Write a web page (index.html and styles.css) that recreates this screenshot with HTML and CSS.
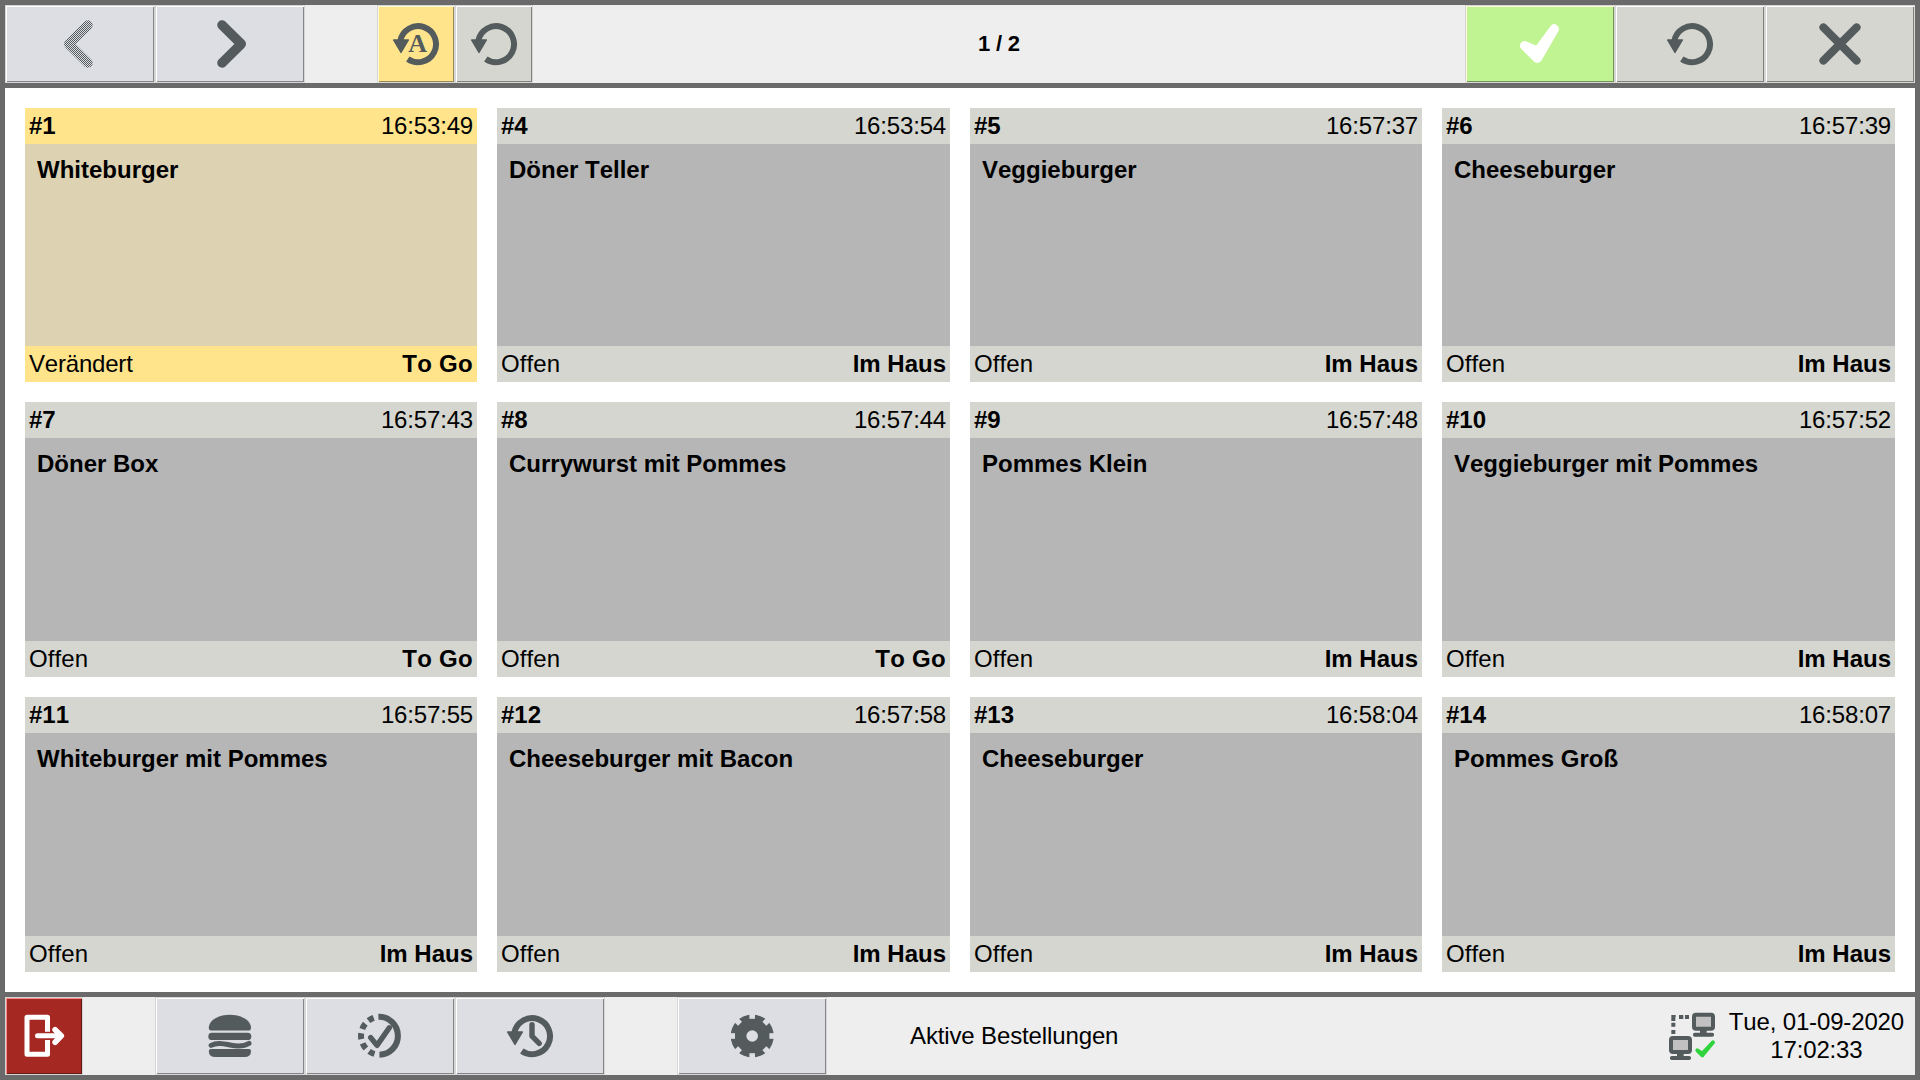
FILE: index.html
```html
<!DOCTYPE html>
<html lang="de">
<head>
<meta charset="utf-8">
<title>Aktive Bestellungen</title>
<link rel="stylesheet" href="styles.css">
</head>
<body>
<svg class="defs" aria-hidden="true">
  <defs>
    <pattern id="stipple" width="2" height="2" patternUnits="userSpaceOnUse">
      <path class="dot" d="M0 0h1v1h-1zM1 1h1v1h-1z"/>
    </pattern>
    <mask id="gear-cut" maskUnits="userSpaceOnUse" x="0" y="0" width="48" height="48">
      <rect width="48" height="48" fill="#fff"/>
      <circle cx="24.2" cy="24" r="5.8"/>
      <g id="notches">
        <rect x="21.4" y="0" width="5.6" height="6.8"/>
        <rect x="21.4" y="0" width="5.6" height="6.8" transform="rotate(45 24.2 24)"/>
        <rect x="21.4" y="0" width="5.6" height="6.8" transform="rotate(90 24.2 24)"/>
        <rect x="21.4" y="0" width="5.6" height="6.8" transform="rotate(135 24.2 24)"/>
        <rect x="21.4" y="0" width="5.6" height="6.8" transform="rotate(180 24.2 24)"/>
        <rect x="21.4" y="0" width="5.6" height="6.8" transform="rotate(225 24.2 24)"/>
        <rect x="21.4" y="0" width="5.6" height="6.8" transform="rotate(270 24.2 24)"/>
        <rect x="21.4" y="0" width="5.6" height="6.8" transform="rotate(315 24.2 24)"/>
      </g>
    </mask>
    <symbol id="undo" viewBox="0 0 48 48">
      <path d="M8.4 20.5A18 18 0 1 1 15.8 39" fill="none" stroke="currentColor" stroke-width="6"/>
      <path d="M1.6 20H16.4L9 32.4Z" fill="currentColor" stroke="currentColor" stroke-width="1.4" stroke-linejoin="round"/>
    </symbol>
  </defs>
</svg>
<div class="app">
  <header class="bar">
    <button class="btn" disabled><svg class="icon" viewBox="0 0 48 48"><path class="line stippled" stroke-width="9.5" d="M32 5L12.75 24L32 43"/></svg></button>
    <button class="btn"><svg class="icon" viewBox="0 0 48 48"><path class="line" stroke-width="9.5" d="M16 5L35.25 24L16 43"/></svg></button>
    <button class="btn small yellow gap-before"><svg class="icon" viewBox="0 0 48 48"><use href="#undo"/><text class="auto" x="25.6" y="32.3">A</text></svg></button>
    <button class="btn small neutral"><svg class="icon"><use href="#undo"/></svg></button>
    <div class="pager">1 / 2</div>
    <button class="btn green"><svg class="icon" viewBox="0 0 48 48"><path class="solid" stroke-width="9.4" d="M8.7 25.7L21.3 38.3L38.3 9L21.8 31.4Z"/></svg></button>
    <button class="btn neutral"><svg class="icon"><use href="#undo"/></svg></button>
    <button class="btn neutral"><svg class="icon" viewBox="0 0 48 48"><path class="line" stroke-width="8" d="M7.4 7.4L40.6 40.6M40.6 7.4L7.4 40.6"/></svg></button>
  </header>

  <main class="orders">
    <article class="order changed"><div class="strip"><b>#1</b><span class="time">16:53:49</span></div><div class="item">Whiteburger</div><div class="strip"><span class="edited">Verändert</span><b class="togo">To Go</b></div></article>
    <article class="order"><div class="strip"><b>#4</b><span class="time">16:53:54</span></div><div class="item">Döner Teller</div><div class="strip"><span class="open">Offen</span><b>Im Haus</b></div></article>
    <article class="order"><div class="strip"><b>#5</b><span class="time">16:57:37</span></div><div class="item">Veggieburger</div><div class="strip"><span class="open">Offen</span><b>Im Haus</b></div></article>
    <article class="order"><div class="strip"><b>#6</b><span class="time">16:57:39</span></div><div class="item">Cheeseburger</div><div class="strip"><span class="open">Offen</span><b>Im Haus</b></div></article>
    <article class="order"><div class="strip"><b>#7</b><span class="time">16:57:43</span></div><div class="item">Döner Box</div><div class="strip"><span class="open">Offen</span><b class="togo">To Go</b></div></article>
    <article class="order"><div class="strip"><b>#8</b><span class="time">16:57:44</span></div><div class="item">Currywurst mit Pommes</div><div class="strip"><span class="open">Offen</span><b class="togo">To Go</b></div></article>
    <article class="order"><div class="strip"><b>#9</b><span class="time">16:57:48</span></div><div class="item">Pommes Klein</div><div class="strip"><span class="open">Offen</span><b>Im Haus</b></div></article>
    <article class="order"><div class="strip"><b>#10</b><span class="time">16:57:52</span></div><div class="item">Veggieburger mit Pommes</div><div class="strip"><span class="open">Offen</span><b>Im Haus</b></div></article>
    <article class="order"><div class="strip"><b>#11</b><span class="time">16:57:55</span></div><div class="item">Whiteburger mit Pommes</div><div class="strip"><span class="open">Offen</span><b>Im Haus</b></div></article>
    <article class="order"><div class="strip"><b>#12</b><span class="time">16:57:58</span></div><div class="item">Cheeseburger mit Bacon</div><div class="strip"><span class="open">Offen</span><b>Im Haus</b></div></article>
    <article class="order"><div class="strip"><b>#13</b><span class="time">16:58:04</span></div><div class="item">Cheeseburger</div><div class="strip"><span class="open">Offen</span><b>Im Haus</b></div></article>
    <article class="order"><div class="strip"><b>#14</b><span class="time">16:58:07</span></div><div class="item">Pommes Groß</div><div class="strip"><span class="open">Offen</span><b>Im Haus</b></div></article>
  </main>

  <footer class="bar">
    <button class="btn small red"><svg class="icon" viewBox="0 0 48 48">
      <path d="M27.5 19.7V5.2H7V42.2H27.5V28" fill="none" stroke="currentColor" stroke-width="5" stroke-linejoin="round"/>
      <path class="line" stroke-width="5" d="M17.5 23.8H39"/>
      <path class="line" stroke-width="5.6" d="M35.1 17.8L41.3 23.8L35.1 30.2"/>
    </svg></button>
    <button class="btn gap-before"><svg class="icon" viewBox="0 0 48 48" fill="currentColor">
      <path d="M2.8 15C4 7 14 2.8 23.8 2.8S43.8 7 45 15Q45.2 18.4 43 18.4H5Q2.6 18.4 2.8 15Z"/>
      <rect x="2.3" y="20.8" width="43" height="7.2" rx="3.6"/>
      <path class="line" stroke-width="5" d="M5.1 33.4C11 30.2 17 31.6 24 33C31 34.4 38 34.4 43 31.4"/>
      <path d="M5 37H43Q45 37 45 39Q45 45 38.5 45H9.3Q2.8 45 2.8 39Q2.8 37 5 37Z"/>
    </svg></button>
    <button class="btn"><svg class="icon" viewBox="0 0 48 48">
      <g fill="none" stroke="currentColor" stroke-width="6">
        <path d="M22.4 4.8A19 19 0 1 1 23.4 42.8"/>
        <path stroke-dasharray="6 4.38" d="M18.5 42A19 19 0 0 1 17.7 5.9"/>
      </g>
      <path class="line" stroke-width="5.4" d="M14.7 25.6L21 33.4L33.3 15.8"/>
    </svg></button>
    <button class="btn"><svg class="icon" viewBox="0 0 48 48"><use href="#undo"/><path class="line" stroke-width="5.4" d="M26 12.6V24.2L33.2 31.4"/></svg></button>
    <button class="btn gap-before"><svg class="icon" viewBox="0 0 48 48"><circle cx="24.2" cy="24" r="21.5" fill="currentColor" mask="url(#gear-cut)"/></svg></button>
    <div class="view-name">Aktive Bestellungen</div>
    <svg class="network" viewBox="84 93 144 150">
      <g fill="currentColor">
        <path d="M94 105h13v6h-1v12h-12zM117 105h13v12h-13zM135 105h12v12h-12zM94 128h12v12h-12zM94 150h12v12h-12z"/>
        <rect x="180" y="148" width="20" height="14"/>
        <rect x="159" y="158" width="63" height="12" rx="5"/>
        <rect x="111" y="218" width="20" height="14"/>
        <rect x="90" y="228" width="63" height="12" rx="5"/>
      </g>
      <g fill="#c1c1c1" stroke="currentColor" stroke-width="12">
        <rect x="162" y="104" width="57" height="42" rx="6"/>
        <rect x="93" y="174" width="57" height="42" rx="6"/>
      </g>
      <path class="online" d="M172 211L187 226L219 187L187 221Z"/>
    </svg>
    <div class="clock">Tue, 01-09-2020<br>17:02:33</div>
  </footer>
</div>
</body>
</html>
```
FILE: styles.css
```css
* {
  box-sizing: border-box;
}

body {
  margin: 0;
  font-family: "Liberation Sans", Arial, sans-serif;
  font-size: 24px;
  font-kerning: none;
  color: #000;
}

.defs {
  position: absolute;
  width: 0;
  height: 0;
}

.dot {
  fill: #535b5c;
  shape-rendering: crispEdges;
}

.app {
  display: grid;
  grid-template-rows: 78px 1fr 78px;
  gap: 5px;
  width: 1920px;
  height: 1080px;
  padding: 5px;
  background: #6a6a6a;
}

.bar {
  display: flex;
  align-items: stretch;
  background: #eee;
}

.btn {
  --hi: #fff;
  --lo: #858588;
  display: flex;
  flex: none;
  align-items: center;
  justify-content: center;
  width: 150px;
  padding: 0;
  border: 1px solid #d6d6d6;
  background: #dddee3;
  box-shadow: inset 1px 1px 0 var(--hi), inset -1px -1px 0 var(--lo);
  color: #535b5c;
}

.small {
  width: 78px;
}

.gap-before {
  margin-left: 72px;
}

.neutral {
  --lo: #80807c;
  background: #d5d6cf;
}

.yellow {
  --hi: #ffffd2;
  --lo: #998954;
  background: #ffe48c;
}

.green {
  --hi: #ffffd9;
  --lo: #739257;
  background: #c0f391;
  color: #fff;
}

.red {
  --hi: #f78c88;
  --lo: #631814;
  background: #a52822;
  color: #fff;
}

.icon {
  display: block;
  width: 48px;
  height: 48px;
  overflow: visible;
}

.line {
  fill: none;
  stroke: currentColor;
  stroke-linecap: round;
  stroke-linejoin: round;
}

.stippled {
  stroke: url(#stipple);
}

.solid {
  fill: currentColor;
  stroke: currentColor;
  stroke-linejoin: round;
}

.auto {
  font: bold 26px "Liberation Serif", serif;
  fill: currentColor;
  text-anchor: middle;
}

.pager {
  flex: 1;
  font-size: 22px;
  font-weight: bold;
  letter-spacing: -0.2px;
  line-height: 78px;
  text-align: center;
}

.orders {
  display: grid;
  grid-template-columns: 452px 453px 452px 453px;
  grid-template-rows: 274px 275px 275px;
  gap: 20px;
  padding: 20px;
  background: #fff;
}

.order {
  --strip: #d5d6cf;
  display: grid;
  grid-template-rows: 36px 1fr 36px;
  background: #b6b6b6;
}

.changed {
  --strip: #ffe48c;
  background: #ddd2b2;
}

.strip {
  display: flex;
  justify-content: space-between;
  padding: 0 4px;
  background: var(--strip);
  line-height: 36px;
}

.time {
  letter-spacing: -0.17px;
}

.togo {
  letter-spacing: 0.3px;
}

.edited {
  letter-spacing: -0.2px;
}

.open {
  letter-spacing: 0.12px;
}

.item {
  padding: 8px 12px;
  font-weight: bold;
  line-height: 36px;
}

.view-name {
  flex: 1;
  padding-left: 83px;
  letter-spacing: -0.13px;
  line-height: 78px;
}

.network {
  align-self: center;
  width: 48px;
  height: 50px;
  color: #535b5c;
}

.online {
  fill: #2fd43c;
  stroke: #2fd43c;
  stroke-width: 12;
  stroke-linejoin: round;
}

.clock {
  align-self: center;
  padding: 0 11px 0 13px;
  letter-spacing: -0.15px;
  line-height: 28px;
  text-align: center;
}
```
